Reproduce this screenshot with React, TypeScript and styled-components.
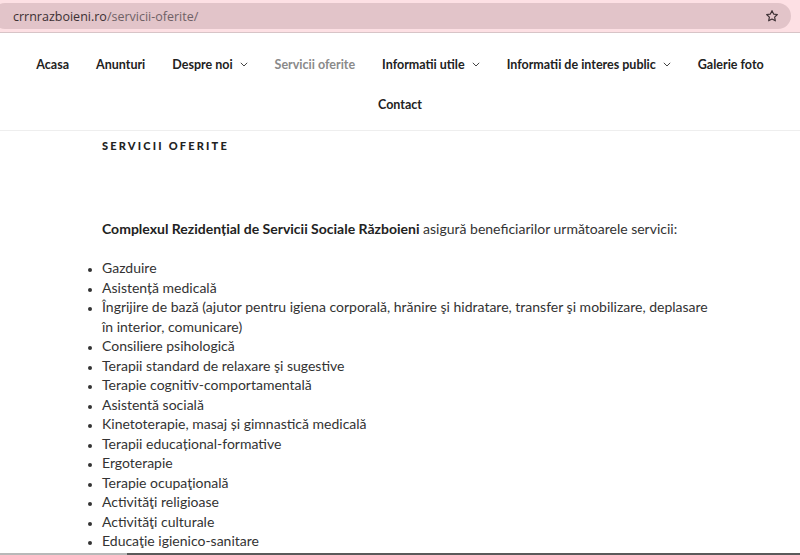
import React from "react";
import styled, { createGlobalStyle } from "styled-components";

const GlobalStyle = createGlobalStyle`
  html, body {
    margin: 0;
    padding: 0;
    background: #fff;
    font-family: Lato, "Liberation Sans", sans-serif;
    color: #222;
  }
`;

const Page = styled.div`
  width: 800px;
  height: 555px;
  overflow: hidden;
  display: flex;
  flex-direction: column;
`;

const BrowserBar = styled.div`
  height: 33px;
  background: #fde0e4;
  border-bottom: 1px solid #d8c4c7;
  display: flex;
  align-items: flex-start;
  padding-top: 3px;
  box-sizing: border-box;
  flex-shrink: 0;
`;

const AddressPill = styled.div`
  margin-left: -8px;
  width: 799px;
  height: 26px;
  border-radius: 13px;
  background: #e2c4c9;
  display: flex;
  align-items: center;
  justify-content: space-between;
  padding: 0 12px 0 21px;
  box-sizing: border-box;
  font-family: "Open Sans", "Liberation Sans", sans-serif;
  font-size: 12.5px;
  color: #3c3034;
`;

const Url = styled.span`
  span {
    color: #6f6166;
  }
`;

const Nav = styled.nav`
  border-bottom: 1px solid #eee;
  padding: 11px 33px 0;
  height: 98px;
  box-sizing: border-box;
  display: flex;
  flex-wrap: wrap;
  justify-content: center;
  align-content: flex-start;
  column-gap: 27px;
  flex-shrink: 0;
`;

const NavItem = styled.a<{ $current?: boolean }>`
  display: flex;
  align-items: center;
  gap: 7px;
  height: 40px;
  font-size: 12.5px;
  font-weight: 700;
  color: ${(p) => (p.$current ? "#8a8a8a" : "#222")};
  text-decoration: none;
  white-space: nowrap;
`;

const Chevron = () => (
  <svg width="8" height="5" viewBox="0 0 8 5" fill="none">
    <path d="M0.8 0.8 L4 4 L7.2 0.8" stroke="#444" strokeWidth="1" />
  </svg>
);

const Content = styled.main`
  width: 596px;
  margin: 0 auto;
  padding-top: 7px;
`;

const Title = styled.h1`
  margin: 0;
  font-size: 11px;
  font-weight: 900;
  letter-spacing: 0.2em;
  line-height: 16px;
  text-transform: uppercase;
  color: #222;
`;

const Intro = styled.p`
  margin: 65px 0 0;
  font-size: 14px;
  line-height: 20px;
  color: #333;
  strong {
    color: #222;
    font-weight: 700;
  }
`;

const ServiceList = styled.ul`
  margin: 19px -10px 0 0;
  padding: 0;
  list-style: disc outside;
  font-size: 14px;
  line-height: 19.5px;
  color: #333;
  li::marker {
    font-size: 11px;
  }
`;

const BottomEdge = styled.div`
  margin-top: auto;
  height: 2px;
  background: linear-gradient(to right, #b8b8b8 0 127px, #5a5a5a 127px);
  flex-shrink: 0;
`;

const navItems = [
  { label: "Acasa" },
  { label: "Anunturi" },
  { label: "Despre noi", sub: true },
  { label: "Servicii oferite", current: true },
  { label: "Informatii utile", sub: true },
  { label: "Informatii de interes public", sub: true },
  { label: "Galerie foto" },
  { label: "Contact" },
];

const services = [
  "Gazduire",
  "Asistență medicală",
  "Îngrijire de bază (ajutor pentru igiena corporală, hrănire şi hidratare, transfer şi mobilizare, deplasare în interior, comunicare)",
  "Consiliere psihologică",
  "Terapii standard de relaxare şi sugestive",
  "Terapie cognitiv-comportamentală",
  "Asistentă socială",
  "Kinetoterapie, masaj și gimnastică medicală",
  "Terapii educațional-formative",
  "Ergoterapie",
  "Terapie ocupaţională",
  "Activităţi religioase",
  "Activităţi culturale",
  "Educaţie igienico-sanitare",
];

export default function App() {
  return (
    <Page>
      <GlobalStyle />
      <BrowserBar>
        <AddressPill>
          <Url>
            crrnrazboieni.ro<span>/servicii-oferite/</span>
          </Url>
          <svg width="14" height="14" viewBox="0 0 24 24" fill="none">
            <path
              d="M12 2.8l2.8 5.9 6.4.8-4.7 4.4 1.2 6.4L12 17.2l-5.7 3.1 1.2-6.4-4.7-4.4 6.4-.8z"
              stroke="#3c3034"
              strokeWidth="2"
              strokeLinejoin="round"
            />
          </svg>
        </AddressPill>
      </BrowserBar>
      <Nav>
        {navItems.map((item) => (
          <NavItem key={item.label} $current={item.current}>
            {item.label}
            {item.sub && <Chevron />}
          </NavItem>
        ))}
      </Nav>
      <Content>
        <Title>Servicii oferite</Title>
        <Intro>
          <strong>Complexul Rezidențial de Servicii Sociale Războieni</strong> asigură beneficiarilor următoarele servicii:
        </Intro>
        <ServiceList>
          {services.map((s) => (
            <li key={s}>{s}</li>
          ))}
        </ServiceList>
      </Content>
      <BottomEdge />
    </Page>
  );
}
